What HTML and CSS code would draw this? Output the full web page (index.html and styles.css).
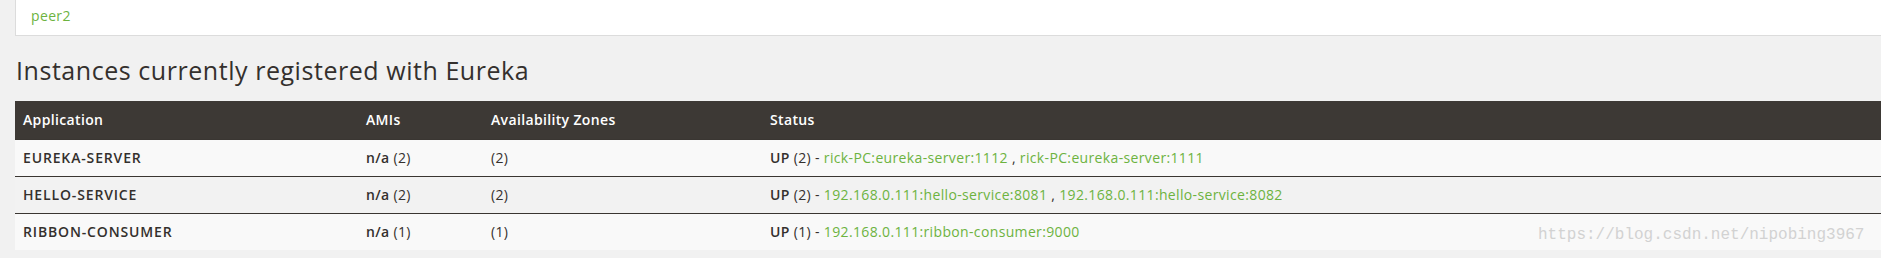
FILE: index.html
```html
<!DOCTYPE html>
<html>
<head>
<meta charset="utf-8">
<link rel="stylesheet" href="styles.css">
</head>
<body>
<div class="page">
  <div class="peers">
    <a class="link peer" href="#">peer2</a>
  </div>
  <h1 class="title">Instances currently registered with Eureka</h1>
  <table class="apps">
    <thead>
      <tr>
        <th class="c-app">Application</th>
        <th class="c-ami">AMIs</th>
        <th class="c-az">Availability Zones</th>
        <th class="c-status">Status</th>
      </tr>
    </thead>
    <tbody>
      <tr>
        <td><b class="name">EUREKA-SERVER</b></td>
        <td><b>n/a</b> (2)</td>
        <td>(2)</td>
        <td><b>UP</b> (2) - <a class="link" href="#">rick-PC:eureka-server:1112</a> , <a class="link" href="#">rick-PC:eureka-server:1111</a></td>
      </tr>
      <tr>
        <td><b class="name">HELLO-SERVICE</b></td>
        <td><b>n/a</b> (2)</td>
        <td>(2)</td>
        <td><b>UP</b> (2) - <a class="link" href="#">192.168.0.111:hello-service:8081</a> , <a class="link" href="#">192.168.0.111:hello-service:8082</a></td>
      </tr>
      <tr>
        <td><b class="name">RIBBON-CONSUMER</b></td>
        <td><b>n/a</b> (1)</td>
        <td>(1)</td>
        <td><b>UP</b> (1) - <a class="link" href="#">192.168.0.111:ribbon-consumer:9000</a></td>
      </tr>
    </tbody>
  </table>
</div>
<div class="watermark">https://blog.csdn.net/nipobing3967</div>
</body>
</html>
```
FILE: styles.css
```css
html, body {
  margin: 0;
  padding: 0;
}
body {
  background: #f1f1f1;
  color: #34302d;
  font-family: "Open Sans", "Liberation Sans", sans-serif;
  font-size: 14px;
  letter-spacing: 0.35px;
  overflow: hidden;
  position: relative;
  height: 258px;
}
.page {
  padding-left: 15px;
}
.peers {
  background: #fff;
  border-left: 1px solid #dcdcdc;
  border-bottom: 1px solid #dcdcdc;
  height: 36px;
  box-sizing: border-box;
  padding-left: 15px;
  display: flex;
  align-items: center;
  padding-bottom: 4px;
}
.link {
  color: #6db33f;
  text-decoration: none;
}
.peer {
  font-size: 14px;
}
.title {
  font-size: 25px;
  font-weight: 400;
  line-height: 30px;
  letter-spacing: 0.55px;
  margin: 19px 0 16px 1px;
  color: #34302d;
}
.apps {
  border-collapse: collapse;
  width: 100%;
  table-layout: fixed;
}
.apps th {
  background: #3d3935;
  color: #fff;
  font-weight: 600;
  text-align: left;
  height: 38px;
  padding: 0 8px;
  box-sizing: border-box;
}
.apps td {
  height: 37px;
  box-sizing: border-box;
  padding: 0 8px;
  border-top: 1px solid #3a3632;
  background: #f9f9f9;
  white-space: nowrap;
}
.apps tbody tr:nth-child(even) td {
  background: #f2f2f2;
}
.apps b {
  font-weight: 600;
}
.apps .name {
  font-weight: 600;
  letter-spacing: 0.85px;
}
.c-app { width: 343px; }
.c-ami { width: 125px; }
.c-az { width: 279px; }
.watermark {
  position: absolute;
  left: 1538px;
  top: 226px;
  font-family: "Liberation Mono", monospace;
  font-size: 16px;
  letter-spacing: 0;
  color: #d2d2d2;
  white-space: nowrap;
}
```
